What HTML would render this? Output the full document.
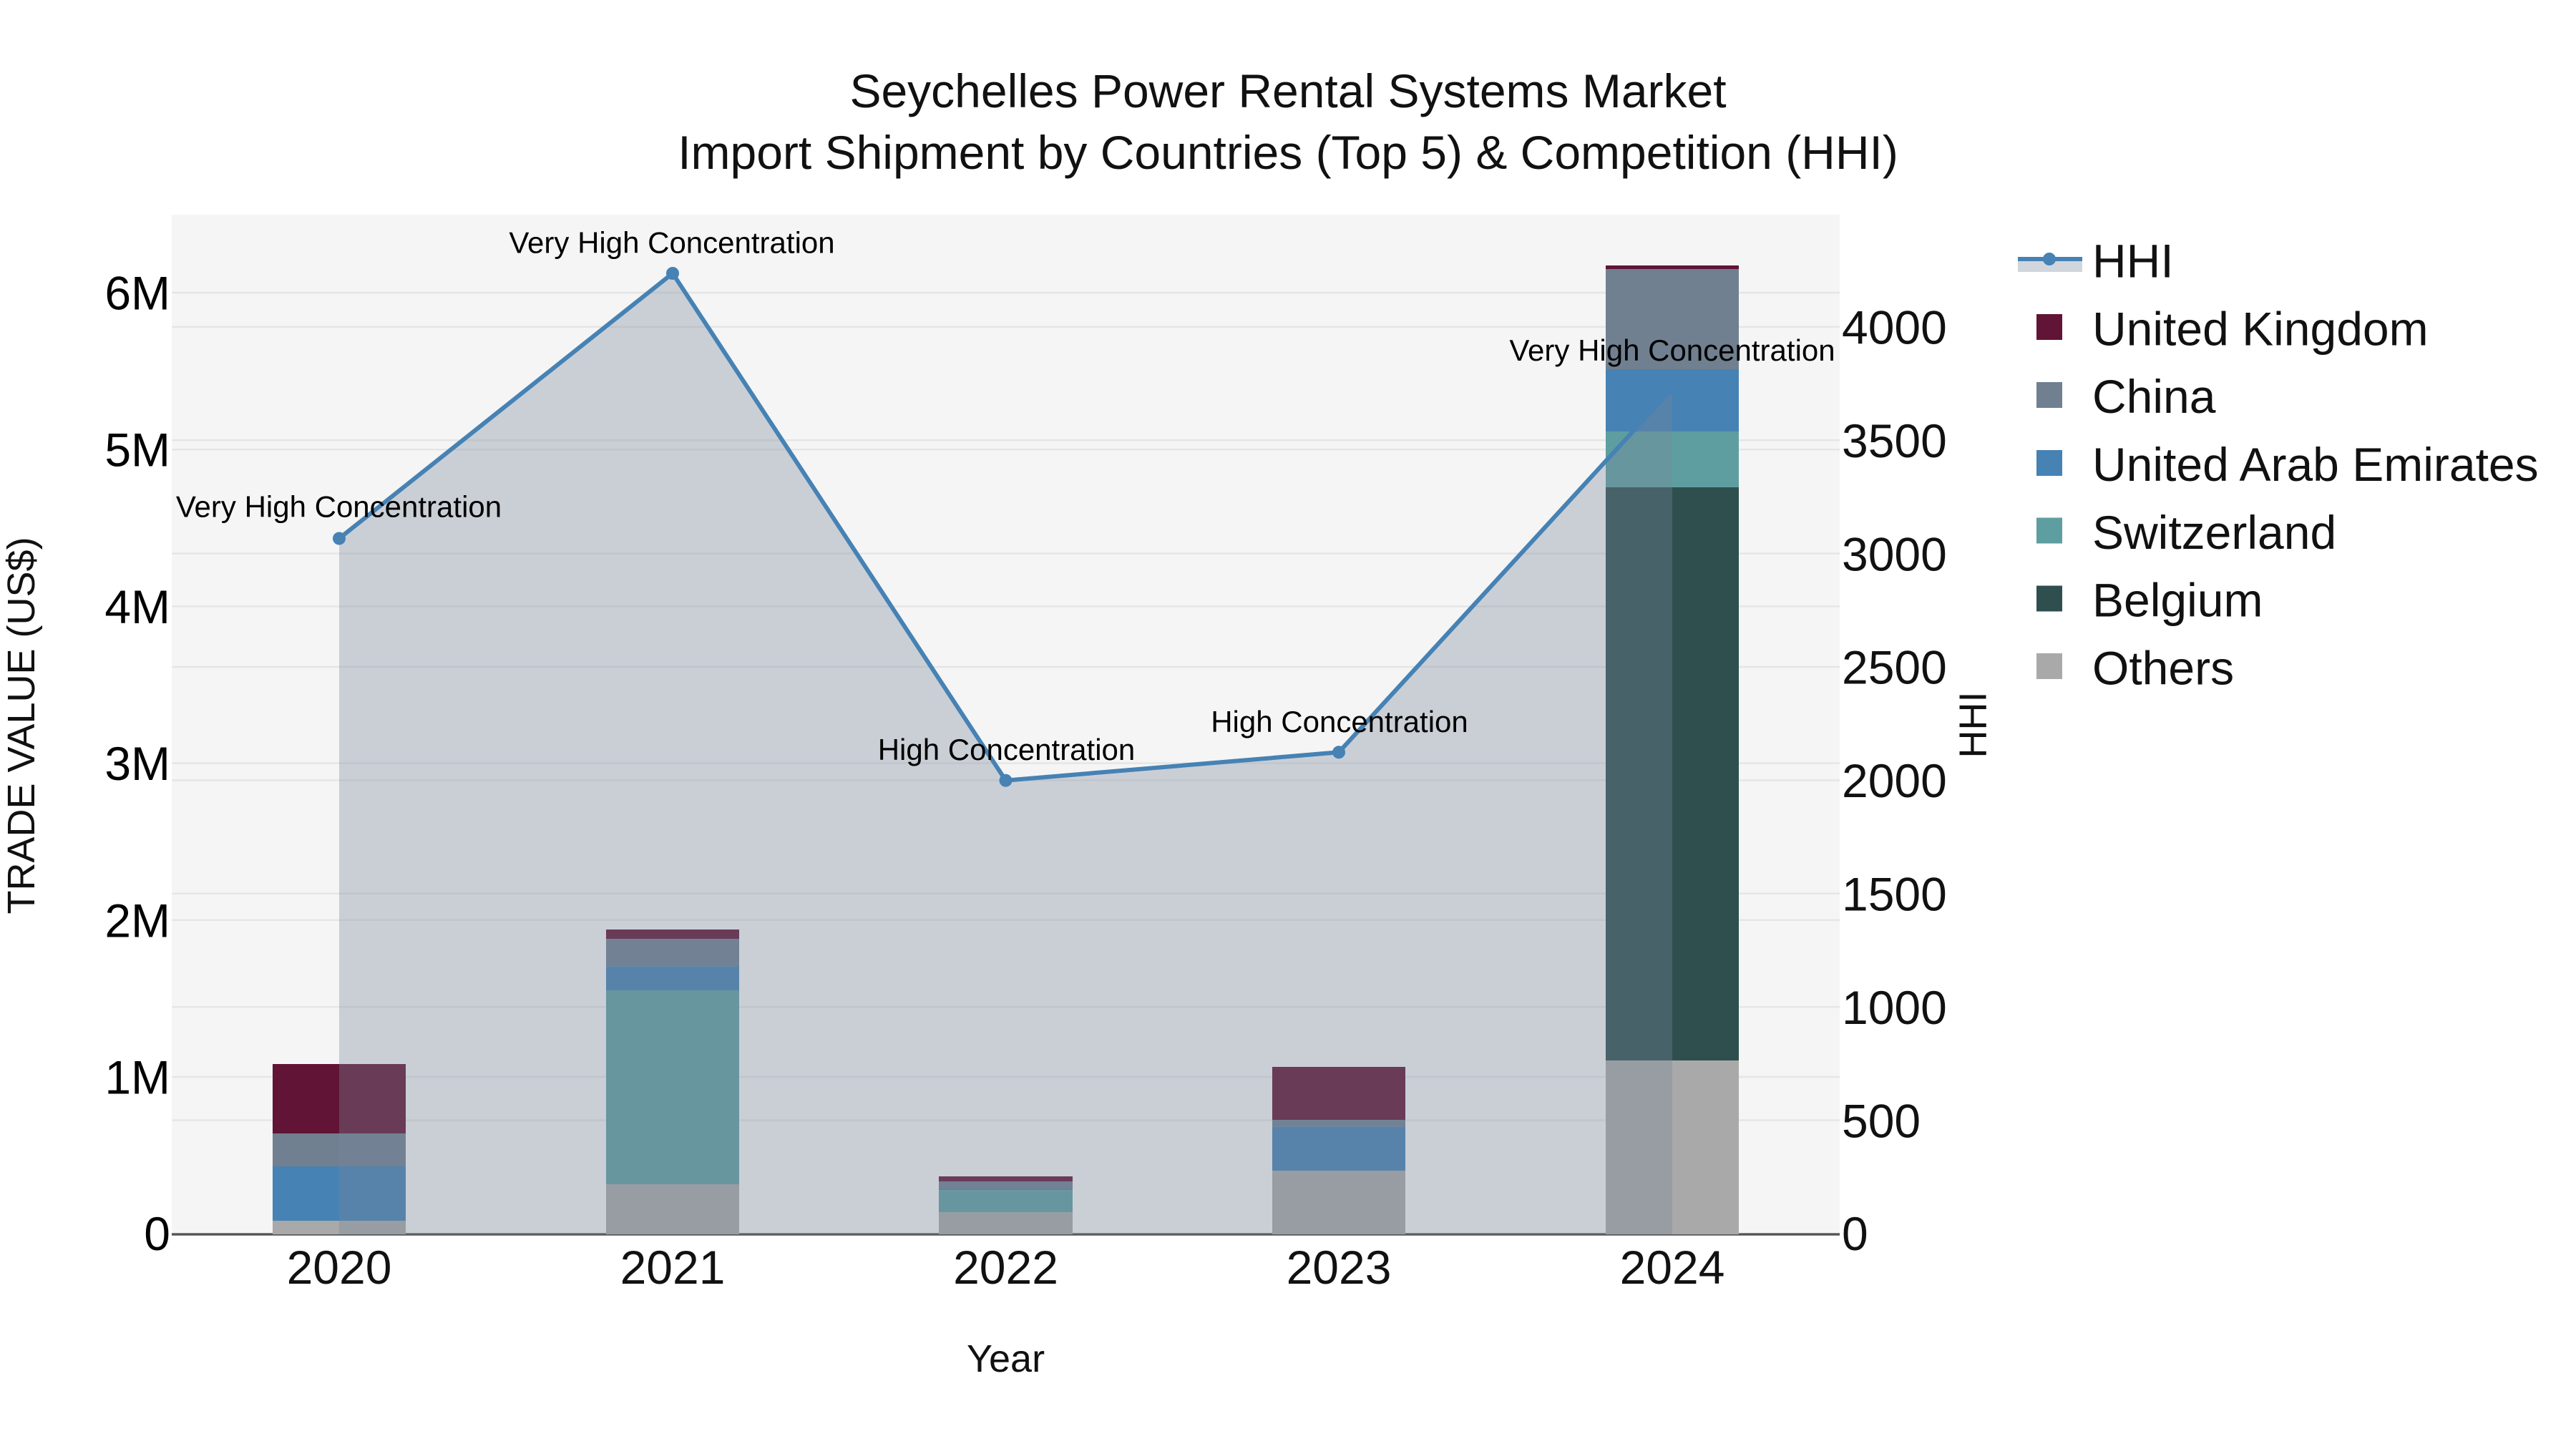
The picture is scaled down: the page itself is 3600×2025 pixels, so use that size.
<!DOCTYPE html>
<html>
<head>
<meta charset="utf-8">
<title>Seychelles Power Rental Systems Market</title>
<style>
html,body{margin:0;padding:0;background:#fff;}
svg{display:block;}
text{font-family:"Liberation Sans",sans-serif;}
</style>
</head>
<body>
<svg xmlns="http://www.w3.org/2000/svg" width="3600" height="2025" viewBox="0 0 3600 2025">
<rect x="0" y="0" width="3600" height="2025" fill="#fff"/>
<rect x="240" y="300" width="2331" height="1425" fill="#f5f5f5"/>
<g stroke="#e5e5e5" stroke-width="2.4">
<line x1="240" x2="2571" y1="409" y2="409"/>
<line x1="240" x2="2571" y1="628.2" y2="628.2"/>
<line x1="240" x2="2571" y1="847.4" y2="847.4"/>
<line x1="240" x2="2571" y1="1066.6" y2="1066.6"/>
<line x1="240" x2="2571" y1="1285.8" y2="1285.8"/>
<line x1="240" x2="2571" y1="1505" y2="1505"/>
<line x1="240" x2="2571" y1="1565.6" y2="1565.6"/>
<line x1="240" x2="2571" y1="1407.2" y2="1407.2"/>
<line x1="240" x2="2571" y1="1248.8" y2="1248.8"/>
<line x1="240" x2="2571" y1="1090.4" y2="1090.4"/>
<line x1="240" x2="2571" y1="932" y2="932"/>
<line x1="240" x2="2571" y1="773.6" y2="773.6"/>
<line x1="240" x2="2571" y1="615.2" y2="615.2"/>
<line x1="240" x2="2571" y1="456.8" y2="456.8"/>
</g>
<rect x="240" y="1723.3" width="2331" height="3.4" fill="#555"/>
<!-- bars 2020 -->
<rect x="381" y="1487" width="186" height="97" fill="#611435"/>
<rect x="381" y="1584" width="186" height="46" fill="#708090"/>
<rect x="381" y="1630" width="186" height="76" fill="#4682b4"/>
<rect x="381" y="1706" width="186" height="19" fill="#a9a9a9"/>
<!-- bars 2021 -->
<rect x="847" y="1299" width="186" height="13" fill="#611435"/>
<rect x="847" y="1312" width="186" height="38.4" fill="#708090"/>
<rect x="847" y="1350.4" width="186" height="33.6" fill="#4682b4"/>
<rect x="847" y="1384" width="186" height="271" fill="#5f9ea0"/>
<rect x="847" y="1655" width="186" height="70" fill="#a9a9a9"/>
<!-- bars 2022 -->
<rect x="1312" y="1644" width="187" height="7" fill="#611435"/>
<rect x="1312" y="1651" width="187" height="10.5" fill="#708090"/>
<rect x="1312" y="1661.5" width="187" height="1.8" fill="#4682b4"/>
<rect x="1312" y="1663.3" width="187" height="30.7" fill="#5f9ea0"/>
<rect x="1312" y="1694" width="187" height="31" fill="#a9a9a9"/>
<!-- bars 2023 -->
<rect x="1778" y="1491" width="186" height="74" fill="#611435"/>
<rect x="1778" y="1565" width="186" height="9.6" fill="#708090"/>
<rect x="1778" y="1574.6" width="186" height="61.4" fill="#4682b4"/>
<rect x="1778" y="1636" width="186" height="89" fill="#a9a9a9"/>
<!-- bars 2024 -->
<rect x="2244" y="371" width="186" height="5" fill="#611435"/>
<rect x="2244" y="376" width="186" height="140" fill="#708090"/>
<rect x="2244" y="516" width="186" height="87" fill="#4682b4"/>
<rect x="2244" y="603" width="186" height="78" fill="#5f9ea0"/>
<rect x="2244" y="681" width="186" height="801" fill="#2f4f4f"/>
<rect x="2244" y="1482" width="186" height="243" fill="#a9a9a9"/>
<!-- HHI fill and line -->
<polygon points="474,752.5 940,382 1405.5,1090.7 1871,1051.3 2337,543 2337,1725 474,1725" fill="rgb(120,134,156)" fill-opacity="0.34"/>
<polyline points="474,752.5 940,382 1405.5,1090.7 1871,1051.3 2337,543" fill="none" stroke="#4682b4" stroke-width="6" stroke-linejoin="round"/>
<g fill="#4682b4">
<circle cx="474" cy="752.5" r="9"/>
<circle cx="940" cy="382" r="9"/>
<circle cx="1405.5" cy="1090.7" r="9"/>
<circle cx="1871" cy="1051.3" r="9"/>
<circle cx="2337" cy="543" r="9"/>
</g>
<!-- annotations -->
<g font-size="42" fill="#000" text-anchor="middle">
<text x="473.5" y="722.4">Very High Concentration</text>
<text x="939" y="353.6">Very High Concentration</text>
<text x="1406.5" y="1062">High Concentration</text>
<text x="1872" y="1023">High Concentration</text>
<text x="2337" y="504">Very High Concentration</text>
</g>
<!-- title -->
<g font-size="66" fill="#111" text-anchor="middle">
<text x="1800" y="150">Seychelles Power Rental Systems Market</text>
<text x="1800" y="236">Import Shipment by Countries (Top 5) &amp; Competition (HHI)</text>
</g>
<!-- left ticks -->
<g font-size="66" fill="#000" text-anchor="end">
<text x="238" y="432.5">6M</text>
<text x="238" y="651.7">5M</text>
<text x="238" y="870.9">4M</text>
<text x="238" y="1090.1">3M</text>
<text x="238" y="1309.3">2M</text>
<text x="238" y="1528.5">1M</text>
<text x="238" y="1747">0</text>
</g>
<!-- right ticks -->
<g font-size="66" fill="#111" text-anchor="start">
<text x="2574" y="480.5">4000</text>
<text x="2574" y="638.9">3500</text>
<text x="2574" y="797.3">3000</text>
<text x="2574" y="955.7">2500</text>
<text x="2574" y="1114.1">2000</text>
<text x="2574" y="1272.5">1500</text>
<text x="2574" y="1430.9">1000</text>
<text x="2574" y="1589.3">500</text>
<text x="2574" y="1747">0</text>
</g>
<!-- x ticks -->
<g font-size="66" fill="#111" text-anchor="middle">
<text x="474" y="1794">2020</text>
<text x="940" y="1794">2021</text>
<text x="1405.5" y="1794">2022</text>
<text x="1871" y="1794">2023</text>
<text x="2337" y="1794">2024</text>
</g>
<!-- axis titles -->
<text x="1405.5" y="1917" font-size="54" fill="#111" text-anchor="middle">Year</text>
<text transform="translate(48 1014) rotate(-90)" font-size="54" fill="#111" text-anchor="middle">TRADE VALUE (US$)</text>
<text transform="translate(2775.5 1013) rotate(-90)" font-size="54" fill="#111" text-anchor="middle">HHI</text>
<!-- legend -->
<rect x="2820" y="362" width="90" height="18" fill="rgb(120,134,156)" fill-opacity="0.34"/>
<rect x="2820" y="359" width="90" height="6" fill="#4682b4"/>
<circle cx="2864" cy="362" r="9" fill="#4682b4"/>
<rect x="2846" y="439" width="36" height="36" fill="#611435"/>
<rect x="2846" y="534" width="36" height="36" fill="#708090"/>
<rect x="2846" y="629" width="36" height="36" fill="#4682b4"/>
<rect x="2846" y="723.5" width="36" height="36" fill="#5f9ea0"/>
<rect x="2846" y="818.5" width="36" height="36" fill="#2f4f4f"/>
<rect x="2846" y="913" width="36" height="36" fill="#a9a9a9"/>
<g font-size="66" fill="#111">
<text x="2924" y="387.7">HHI</text>
<text x="2924" y="482.3">United Kingdom</text>
<text x="2924" y="577">China</text>
<text x="2924" y="672">United Arab Emirates</text>
<text x="2924" y="767">Switzerland</text>
<text x="2924" y="861.5">Belgium</text>
<text x="2924" y="956.5">Others</text>
</g>
</svg>
</body>
</html>
